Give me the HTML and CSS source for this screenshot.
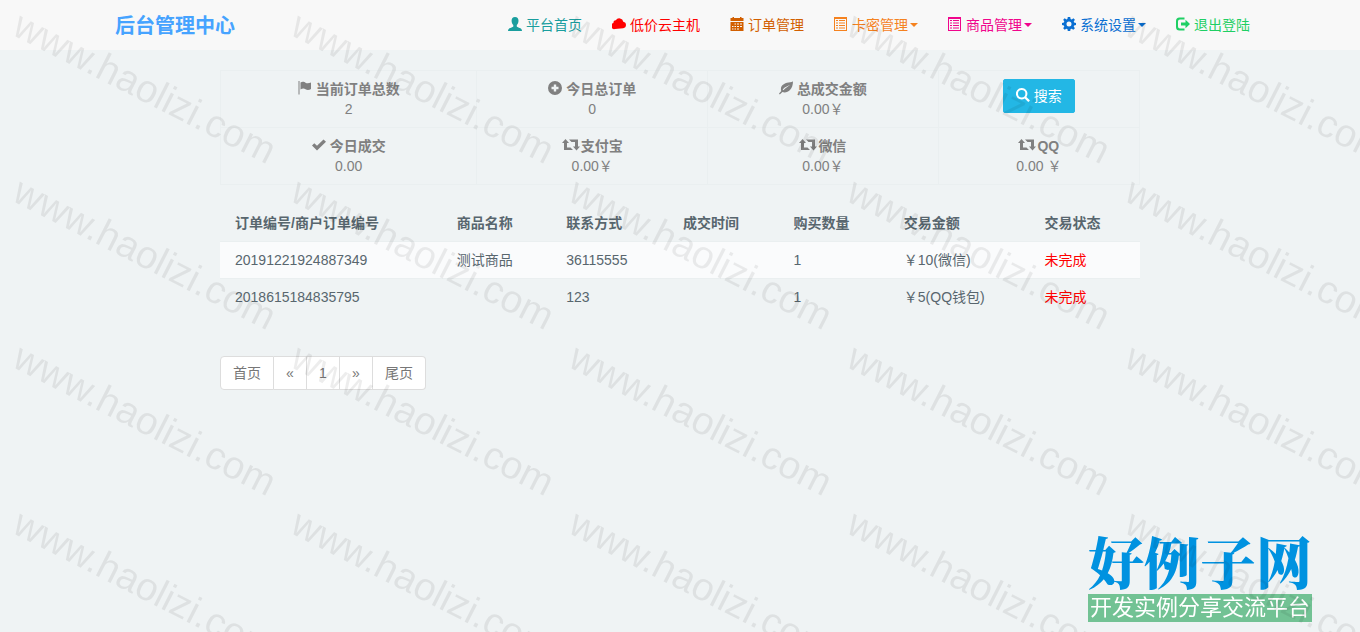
FILE: index.html
```html
<!DOCTYPE html>
<html lang="zh-CN">
<head>
<meta charset="utf-8">
<meta name="viewport" content="width=device-width, initial-scale=1">
<title>后台管理中心</title>
<link rel="stylesheet" href="styles.css">
</head>
<body>
<svg class="sprite" aria-hidden="true">
  <symbol id="i-user" viewBox="0 0 14 14"><path d="M7 0C4.700 0 3.600 1.500 3.600 3.700C3.600 5.500 4.300 7 5.300 7.900V9.500C5.300 10.200 1.200 10.900.500 12.300C.1 13 0 13.500 0 14H14C14 13.500 13.900 13 13.500 12.300C12.800 10.900 8.800 10.200 8.800 9.500V7.900C9.800 7 10.500 5.500 10.500 3.700C10.500 1.500 9.300 0 7 0Z"/></symbol>
  <symbol id="i-cloud" viewBox="0 0 14 14"><path d="M3 12A3 3 0 0 1 1.500 6A2.200 2.200 0 0 1 3.800 3.300A4.100 4.100 0 0 1 11.300 4.700A3.300 3.300 0 0 1 11.200 11.200Z"/></symbol>
  <symbol id="i-cal" viewBox="0 0 14 14"><path fill-rule="evenodd" d="M.500 1H2.500V0H4V1H10V0H11.500V1H13.500V4H.500ZM.500 5H13.500V14H.500ZM4.500 6.500V7.500H6V6.500ZM7 6.500V7.500H9V6.500ZM10 6.500V7.500H12V6.500ZM2 9V10H3.500V9ZM4.500 9V10H6V9ZM7 9V10H9V9ZM10 9V10H12V9ZM2 11.500V12.500H3.500V11.500ZM4.500 11.500V12.500H6V11.500ZM7 11.500V12.500H9V11.500Z"/></symbol>
  <symbol id="i-list" viewBox="0 0 14 14"><path fill-rule="evenodd" d="M0 0H13V14H0ZM1 2V13H12V2ZM2 3H4V4H2ZM5 3H11V4H5ZM2 5.500H4V6.500H2ZM5 5.500H11V6.500H5ZM2 8H4V9H2ZM5 8H11V9H5ZM2 10.500H4V11.500H2ZM5 10.500H11V11.500H5Z"/></symbol>
  <symbol id="i-cog" viewBox="0 0 14 14"><path fill-rule="evenodd" d="M5.800 0H8.200L8.600 2L9.700 2.500L11.400 1.300L12.900 2.800L11.700 4.500L12.100 5.500L14 5.900V8.100L12.100 8.500L11.700 9.600L12.900 11.300L11.300 12.800L9.600 11.700L8.600 12.100L8.200 14H5.800L5.400 12.100L4.400 11.700L2.700 12.800L1.200 11.300L2.300 9.600L1.900 8.500L0 8.100V5.900L1.900 5.500L2.300 4.500L1.200 2.800L2.700 1.300L4.400 2.500L5.400 2ZM7 4.500A2.500 2.500 0 1 0 7 9.500A2.500 2.500 0 1 0 7 4.500Z"/></symbol>
  <symbol id="i-out" viewBox="0 0 14 14"><path d="M8.500 .500H3.500A3.500 3.500 0 0 0 0 4V10A3.500 3.500 0 0 0 3.500 13.500H8.500V11.500H4A2 2 0 0 1 2 9.500V4.500A2 2 0 0 1 4 2.500H8.500ZM9.500 2.800L14 7L9.500 11.200V8.500H5V5.500H9.500Z"/></symbol>
  <symbol id="i-flag" viewBox="0 0 14 14"><path d="M.500 0H1.500V13.500H.500ZM2.500 1.500C4.500.200 6.500 1 7.500 1.700C9 2.700 11 2.300 13 1.500V8C11.500 9 9 9.300 7.500 8.200C6 7.200 4 7.500 2.500 8.500Z"/></symbol>
  <symbol id="i-plus" viewBox="0 0 14 14"><path fill-rule="evenodd" d="M7 0A7 7 0 1 0 7 14A7 7 0 1 0 7 0ZM5.800 3.500H8.200V5.800H10.500V8.200H8.200V10.500H5.800V8.200H3.500V5.800H5.800Z"/></symbol>
  <symbol id="i-leaf" viewBox="0 0 14 14"><path fill-rule="evenodd" d="M14 0C13.500 1 12 1.300 9.500 1.600C5 2.200 1.900 4.500 1.900 8.200C1.900 8.900 2 9.500 2.300 10L0 12.500L.800 13.400L3.400 10.900C5.500 12 9 11.200 11 9C13 6.800 14 4 14 0ZM11.200 3.800C9 5.800 7 6.500 4.300 9.200L3.700 8.600C5.800 5.800 8.500 5.300 11.200 3.800Z"/></symbol>
  <symbol id="i-ok" viewBox="0 0 14 14"><path d="M0 7.500L2.300 5.200L5 7.800L11.500 1.500L14 3.800L5 12.500Z"/></symbol>
  <symbol id="i-retweet" viewBox="0 0 18 14"><path d="M3.500 1L7 5H5V9.500H8.500L11 12H2V5H0ZM7 1.500H16V8.500H18L14.500 12.500L11 8.500H13V4H9.500Z"/></symbol>
  <symbol id="i-search" viewBox="0 0 14 14"><path fill-rule="evenodd" d="M5.700 0A5.700 5.700 0 1 0 8.700 10.500L12 13.800C12.500 14.200 13.800 13 13.800 12.200L10.400 8.900A5.700 5.700 0 0 0 5.700 0ZM5.700 2A3.700 3.700 0 1 1 5.700 9.400A3.700 3.700 0 1 1 5.700 2Z"/></symbol>
</svg>

<header class="navbar">
  <div class="navbar-inner">
    <a class="brand" href="#">后台管理中心</a>
    <nav class="menu">
      <a class="teal" href="#"><svg class="icon"><use href="#i-user"/></svg>平台首页</a>
      <a class="red" href="#"><svg class="icon"><use href="#i-cloud"/></svg>低价云主机</a>
      <a class="brown" href="#"><svg class="icon"><use href="#i-cal"/></svg>订单管理</a>
      <a class="orange" href="#"><svg class="icon"><use href="#i-list"/></svg>卡密管理<span class="caret"></span></a>
      <a class="pink" href="#"><svg class="icon"><use href="#i-list"/></svg>商品管理<span class="caret"></span></a>
      <a class="blue" href="#"><svg class="icon"><use href="#i-cog"/></svg>系统设置<span class="caret"></span></a>
      <a class="green" href="#"><svg class="icon"><use href="#i-out"/></svg>退出登陆</a>
    </nav>
  </div>
</header>

<main class="content">
  <table class="stats">
    <colgroup><col class="s-a"><col class="s-b"><col class="s-b"><col class="s-c"></colgroup>
    <tbody>
      <tr>
        <td><strong><svg class="icon"><use href="#i-flag"/></svg>当前订单总数</strong><br>2</td>
        <td><strong><svg class="icon"><use href="#i-plus"/></svg>今日总订单</strong><br>0</td>
        <td><strong><svg class="icon"><use href="#i-leaf"/></svg>总成交金额</strong><br>0.00￥</td>
        <td><button class="search" type="button"><svg class="icon"><use href="#i-search"/></svg>搜索</button></td>
      </tr>
      <tr>
        <td><strong><svg class="icon"><use href="#i-ok"/></svg>今日成交</strong><br>0.00</td>
        <td><strong><svg class="icon wide"><use href="#i-retweet"/></svg>支付宝</strong><br>0.00￥</td>
        <td><strong><svg class="icon wide"><use href="#i-retweet"/></svg>微信</strong><br>0.00￥</td>
        <td><strong><svg class="icon wide"><use href="#i-retweet"/></svg>QQ</strong><br>0.00 ￥</td>
      </tr>
    </tbody>
  </table>

  <table class="orders">
    <colgroup><col class="o-id"><col class="o-name"><col class="o-contact"><col class="o-time"><col class="o-time"><col class="o-sum"><col class="o-state"></colgroup>
    <thead>
      <tr><th>订单编号/商户订单编号</th><th>商品名称</th><th>联系方式</th><th>成交时间</th><th>购买数量</th><th>交易金额</th><th>交易状态</th></tr>
    </thead>
    <tbody>
      <tr><td>20191221924887349</td><td>测试商品</td><td>36115555</td><td></td><td>1</td><td>￥10(微信)</td><td class="pending">未完成</td></tr>
      <tr><td>2018615184835795</td><td></td><td>123</td><td></td><td>1</td><td>￥5(QQ钱包)</td><td class="pending">未完成</td></tr>
    </tbody>
  </table>

  <nav class="pages" aria-label="分页">
    <a href="#">首页</a><a href="#">«</a><a href="#">1</a><a href="#">»</a><a href="#">尾页</a>
  </nav>
</main>

<div class="site-logo">
  <div class="site-name">好例子网</div>
  <div class="site-slogan">开发实例分享交流平台</div>
</div>

<div class="watermark" aria-hidden="true">
  <span>www.haolizi.com</span><span>www.haolizi.com</span><span>www.haolizi.com</span><span>www.haolizi.com</span><span>www.haolizi.com</span>
  <span>www.haolizi.com</span><span>www.haolizi.com</span><span>www.haolizi.com</span><span>www.haolizi.com</span><span>www.haolizi.com</span>
  <span>www.haolizi.com</span><span>www.haolizi.com</span><span>www.haolizi.com</span><span>www.haolizi.com</span><span>www.haolizi.com</span>
  <span>www.haolizi.com</span><span>www.haolizi.com</span><span>www.haolizi.com</span><span>www.haolizi.com</span><span>www.haolizi.com</span>
</div>
</body>
</html>
```

FILE: styles.css
```css
* { box-sizing: border-box; }

body {
  margin: 0;
  background: #eff3f4;
  color: #58666e;
  font: 14px/20px "Liberation Sans", "Noto Sans CJK SC", sans-serif;
}

a { text-decoration: none; }

.sprite { position: absolute; width: 0; height: 0; }

.icon {
  width: 14px;
  height: 14px;
  margin-right: 4px;
  fill: currentColor;
  vertical-align: -1px;
}
.icon.wide { width: 18px; margin-right: 1px; }

.navbar { background: #f8f8f8; }
.navbar-inner {
  display: flex;
  align-items: center;
  justify-content: space-between;
  max-width: 1170px;
  height: 50px;
  margin: 0 auto;
  padding-left: 20px;
}
.brand { padding-top: 2px; color: #46a3ff; font-size: 20px; font-weight: bold; }
.menu { display: flex; }
.menu a { display: flex; align-items: center; padding: 15px; white-space: nowrap; }
.menu .icon { margin-bottom: 2px; }
.caret {
  margin-left: 2px;
  border: 4px solid transparent;
  border-top-color: currentColor;
  border-bottom: 0;
}
.teal { color: #1a9e9e; }
.red { color: #f00; }
.brown { color: #d25f00; }
.orange { color: #f5821f; }
.pink { color: #f0058c; }
.blue { color: #0a6fd2; }
.green { color: #1fcf64; }

.content { max-width: 920px; margin: 0 auto; padding-top: 20px; }

table { width: 100%; border-collapse: collapse; table-layout: fixed; }

.stats { color: #808080; text-align: center; }
.stats td { height: 57px; padding: 8px; border: 1px solid #eaeff0; vertical-align: top; }
.s-a { width: 27.9%; }
.s-b { width: 25.1%; }
.s-c { width: 21.9%; }

.search {
  height: 34px;
  padding: 0 12px;
  border: 1px solid #23b7e5;
  border-radius: 2px;
  background: #23b7e5;
  color: #fff;
  font: inherit;
}

.orders { margin-top: 20px; }
.orders th, .orders td { padding: 8px 0 8px 15px; text-align: left; white-space: nowrap; }
.orders th { height: 36px; }
.orders td { height: 37px; border-top: 1px solid #eaeff0; }
.orders tbody tr:nth-child(odd) { background: #fafbfc; }
.orders .pending { color: #f00; }
.o-id { width: 24.1%; }
.o-name { width: 11.9%; }
.o-contact { width: 12.7%; }
.o-time { width: 12%; }
.o-sum { width: 15.3%; }
.o-state { width: 12%; }

.pages { display: flex; margin-top: 40px; }
.pages a {
  padding: 6px 12px;
  border: 1px solid #ddd;
  border-left-width: 0;
  background: #fff;
  color: #777;
  min-width: 33px;
  text-align: center;
}
.pages a:first-child { border-left-width: 1px; border-radius: 4px 0 0 4px; }
.pages a:last-child { border-radius: 0 4px 4px 0; }

.site-logo { position: fixed; right: 48px; bottom: 10px; text-align: center; white-space: nowrap; }
.site-name {
  padding-bottom: 4px;
  color: #0092e0;
  font: 900 56px/60px "Noto Serif CJK SC", "Noto Sans CJK SC", serif;
}
.site-slogan { padding: 0 1px; background: #72c294; color: #fff; font-size: 22px; line-height: 28px; }

.watermark {
  position: fixed;
  inset: 0;
  overflow: hidden;
  display: grid;
  grid-template-columns: repeat(5, 278px);
  grid-auto-rows: 166px;
  padding: 1px 0 0 11px;
  color: rgba(0, 0, 0, 0.07);
  font-size: 39px;
  line-height: 40px;
  pointer-events: none;
}
.watermark span { transform: rotate(27deg); transform-origin: 0 32px; white-space: nowrap; }
```
